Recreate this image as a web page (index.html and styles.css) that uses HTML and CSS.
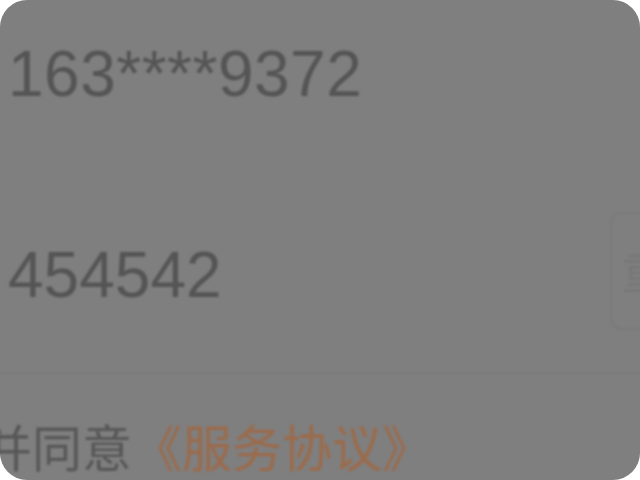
FILE: index.html
```html
<!DOCTYPE html>
<html lang="zh">
<head>
<meta charset="utf-8">
<title>登录</title>
<link rel="stylesheet" href="styles.css">
</head>
<body>
<div class="panel">
  <div class="content">
    <div class="phone-row">163****9372</div>
    <div class="code-row">
      <div class="code">454542</div>
      <div class="send-btn">重新获取</div>
    </div>
    <div class="divider"></div>
    <div class="agree">我已阅读并同意<span class="link">《服务协议》</span></div>
  </div>
</div>
</body>
</html>
```
FILE: styles.css
```css
html, body {
  margin: 0;
  padding: 0;
  background: #ffffff;
}
.panel {
  width: 640px;
  height: 480px;
  background: #7f7f7f;
  border-radius: 27px;
  overflow: hidden;
}
.content {
  display: flex;
  flex-direction: column;
  filter: blur(1.1px);
  font-family: "Liberation Sans", "Noto Sans CJK SC", sans-serif;
  color: #555555;
}
.phone-row {
  padding: 42px 0 0 8px;
  font-size: 64px;
  line-height: 64px;
  height: 64px;
  letter-spacing: 0.5px;
}
.code-row {
  margin-top: 106px;
  height: 118px;
  display: flex;
  align-items: flex-start;
  justify-content: space-between;
}
.code {
  margin-top: 31px;
  padding-left: 8px;
  font-size: 64px;
  line-height: 64px;
}
.send-btn {
  flex: none;
  width: 180px;
  height: 114px;
  margin-right: -164px;
  border: 2px solid #7a7a7a;
  border-radius: 12px;
  box-sizing: content-box;
  box-shadow: 0 0 2px rgba(0,0,0,0.05);
  padding-left: 10px;
  font-family: "Noto Sans CJK SC", sans-serif;
  font-size: 44px;
  line-height: 114px;
  color: #777777;
  white-space: nowrap;
  overflow: hidden;
}
.divider {
  margin-top: 42px;
  height: 2px;
  background: #7a7a7a;
}
.agree {
  margin-top: 46px;
  margin-left: -218px;
  font-family: "Noto Sans CJK SC", sans-serif;
  font-size: 50px;
  line-height: 50px;
  white-space: nowrap;
  color: #585858;
}
.link {
  color: #9b6b4c;
}
```
